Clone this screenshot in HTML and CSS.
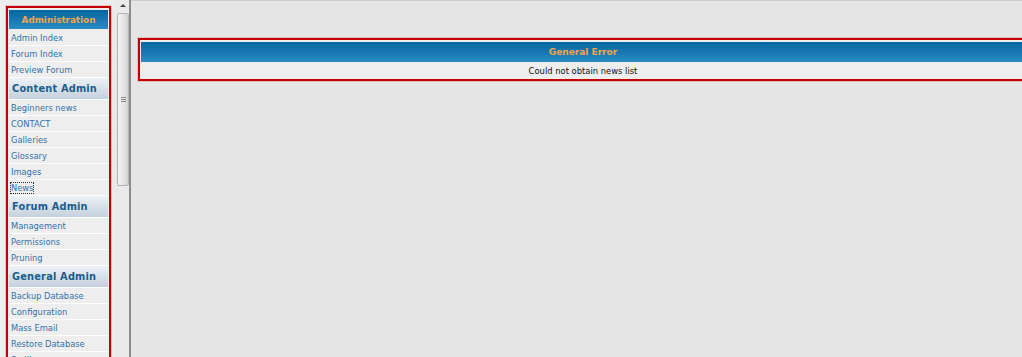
FILE: index.html
```html
<!DOCTYPE html>
<html lang="en">
<head>
  <meta charset="UTF-8" />
  <title>Administration</title>
  <link rel="stylesheet" href="styles.css">
</head>
<body>

  <div class="frameset">

    <!-- Left frame: admin navigation -->
    <div class="nav-frame">
      <div class="nav-scroll">
        <div class="nav">
          <div class="nav-title">Administration</div>
          <a class="nav-link" href="#">Admin Index</a>
          <a class="nav-link" href="#">Forum Index</a>
          <a class="nav-link" href="#">Preview Forum</a>

          <div class="nav-section">Content Admin</div>
          <a class="nav-link" href="#">Beginners news</a>
          <a class="nav-link" href="#">CONTACT</a>
          <a class="nav-link" href="#">Galleries</a>
          <a class="nav-link" href="#">Glossary</a>
          <a class="nav-link" href="#">Images</a>
          <a class="nav-link" href="#"><span class="focused">News</span></a>

          <div class="nav-section">Forum Admin</div>
          <a class="nav-link" href="#">Management</a>
          <a class="nav-link" href="#">Permissions</a>
          <a class="nav-link" href="#">Pruning</a>

          <div class="nav-section">General Admin</div>
          <a class="nav-link" href="#">Backup Database</a>
          <a class="nav-link" href="#">Configuration</a>
          <a class="nav-link" href="#">Mass Email</a>
          <a class="nav-link" href="#">Restore Database</a>
          <a class="nav-link" href="#">Smilies</a>
        </div>
      </div>

      <!-- fake frame scrollbar -->
      <div class="scrollbar">
        <div class="arrow"></div>
        <div class="thumb"><span class="grip"></span></div>
      </div>
    </div>

    <div class="divider"></div>

    <!-- Right frame: message -->
    <div class="main-frame">
      <div class="forumline">
        <div class="cat">General Error</div>
        <div class="row">Could not obtain news list</div>
      </div>
    </div>

  </div>

</body>
</html>
```

FILE: styles.css
```css
* {
  margin: 0;
  padding: 0;
  box-sizing: border-box;
  font-family: 'DejaVu Sans', Verdana, sans-serif;
}

html, body {
  height: 100%;
  overflow: hidden;
}

body {
  background: #e5e5e5;
  color: #000;
}

.frameset {
  display: flex;
  height: 357px;
}

/* Left frame */
.nav-frame {
  width: 129px;
  flex-shrink: 0;
  display: flex;
  background: #eeeeee;
}

.nav-scroll {
  width: 113px;
  padding: 6px 0 0 6px;
  overflow: hidden;
}

.nav {
  width: 105px;
  border: 2px solid #c40000;
  border-bottom: none;
  padding: 2px 1px 0;
  box-shadow: 0 0 0 1px rgba(220, 120, 120, 0.35);
}

.nav-title {
  height: 20px;
  line-height: 20px;
  text-align: center;
  font-size: 8.8px;
  font-weight: bold;
  color: #f4a44a;
  background: linear-gradient(#0565a0, #2a8bc2);
  border-bottom: 1px solid #eee;
}

.nav-link {
  display: block;
  height: 16px;
  line-height: 16px;
  padding-left: 2px;
  font-size: 8.3px;
  color: #2f72aa;
  text-decoration: none;
  border-bottom: 1px solid #fff;
}

.focused {
  outline: 1px dotted #333;
  outline-offset: 0;
}

.nav-section {
  height: 22px;
  line-height: 22px;
  padding-left: 3px;
  font-size: 9.8px;
  font-weight: bold;
  letter-spacing: 0.2px;
  color: #1b5d91;
  background: linear-gradient(#edf1f5, #c4d1dc);
  border-bottom: 1px solid #fff;
}

/* Scrollbar */
.scrollbar {
  width: 16px;
  background: #eaeaea;
  padding-top: 4px;
}

.arrow {
  width: 0;
  height: 0;
  margin: 0 0 6px 7px;
  border-left: 3px solid transparent;
  border-right: 3px solid transparent;
  border-bottom: 3px solid #444;
}

.thumb {
  width: 12px;
  height: 173px;
  margin-left: 4px;
  border: 1px solid #b4b4b4;
  border-radius: 2px;
  background: linear-gradient(90deg, #f4f4f4, #e0e0e0 70%, #cfcfcf);
  display: flex;
  align-items: center;
  justify-content: center;
}

.grip {
  width: 5px;
  height: 5px;
  border-top: 1px solid #888;
  border-bottom: 1px solid #888;
}

.grip::after {
  content: "";
  display: block;
  margin-top: 1px;
  border-top: 1px solid #888;
}

.divider {
  width: 2px;
  flex-shrink: 0;
  background: #8c8c8c;
}

/* Right frame */
.main-frame {
  flex: 1;
  overflow: hidden;
  border-top: 1px solid #cccccc;
  padding: 37px 0 0 7px;
}

.forumline {
  width: 890px;
  border: 2px solid #c40000;
  padding: 2px 1px 0;
  background: #eeeeee;
  box-shadow: 0 0 0 1px rgba(220, 120, 120, 0.35);
}

.cat {
  height: 20px;
  line-height: 21px;
  text-align: center;
  font-size: 9px;
  font-weight: bold;
  color: #f4a44a;
  background: linear-gradient(#0565a0, #2a8bc2);
}

.row {
  height: 17px;
  line-height: 18px;
  text-align: center;
  font-size: 8.4px;
  color: #111;
  background: #eeeeee;
}
```
